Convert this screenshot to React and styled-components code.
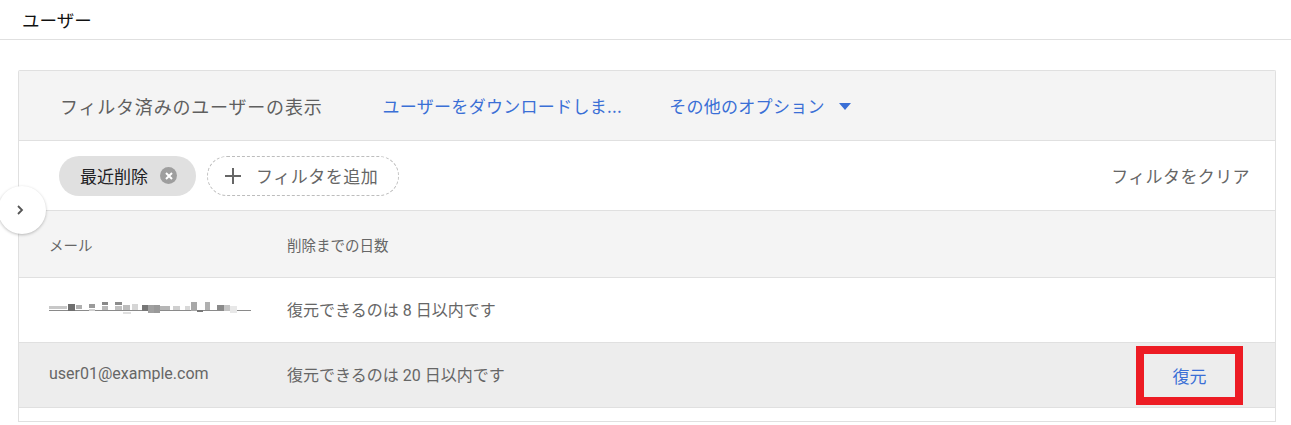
import React from "react";
import styled, { createGlobalStyle } from "styled-components";

const Global = createGlobalStyle`
  html, body { margin: 0; padding: 0; background: #fff; }
  body { font-family: "Noto Sans CJK JP", "Noto Sans", sans-serif; color: #202124; }
`;

const TopBar = styled.header`
  height: 39px;
  border-bottom: 1px solid #e0e0e0;
  display: flex;
  align-items: center;
  padding-left: 22px;
  font-size: 17.5px;
  color: #111;
`;

const Content = styled.main`
  padding: 30px 15px 0 18px;
`;

const Card = styled.section`
  position: relative;
  border: 1px solid #e0e0e0;
  border-bottom: none;
  border-radius: 2px 2px 0 0;
`;

const Toolbar = styled.div`
  height: 69px;
  background: #f4f4f4;
  border-bottom: 1px solid #e0e0e0;
  display: flex;
  align-items: center;
  padding-left: 41px;
`;

const ToolbarTitle = styled.span`
  font-size: 18px;
  letter-spacing: 0.8px;
  color: #5f5f5f;
  margin-right: 60px;
`;

const LinkButton = styled.span`
  font-size: 17px;
  color: #3a6fd6;
  display: inline-flex;
  align-items: center;
  margin-right: ${(p) => p.$mr || 0}px;
  letter-spacing: ${(p) => p.$ls || 0}px;
`;

const Caret = styled.span`
  width: 0;
  height: 0;
  border-left: 6px solid transparent;
  border-right: 6px solid transparent;
  border-top: 7px solid #3a6fd6;
  margin-left: 14px;
  margin-top: 1px;
`;

const FilterRow = styled.div`
  height: 69px;
  border-bottom: 1px solid #e0e0e0;
  display: flex;
  align-items: center;
  padding: 0 25px 0 40px;
  gap: 11px;
`;

const Chip = styled.span`
  height: 40px;
  box-sizing: border-box;
  border-radius: 20px;
  background: #e0e0e0;
  display: inline-flex;
  align-items: center;
  padding: 0 19px 0 21px;
  font-size: 17px;
  color: #202124;
  gap: 12px;
`;

const ChipClose = styled.span`
  width: 17px;
  height: 17px;
  border-radius: 50%;
  background: #9e9e9e;
  display: inline-flex;
  align-items: center;
  justify-content: center;
`;

const AddFilter = styled.span`
  height: 40px;
  box-sizing: border-box;
  border-radius: 20px;
  border: 1px dashed #bdbdbd;
  display: inline-flex;
  align-items: center;
  padding: 0 20px 0 16px;
  font-size: 17px;
  color: #666;
  gap: 14px;
  letter-spacing: 0.5px;
`;

const ClearFilter = styled.span`
  margin-left: auto;
  font-size: 17px;
  color: #666;
  letter-spacing: 0.4px;
`;

const Row = styled.div`
  display: grid;
  grid-template-columns: 238px 1fr auto;
  align-items: center;
  height: ${(p) => p.$h || 64}px;
  padding: 0 32px 0 30px;
  background: ${(p) => p.$bg || "#fff"};
  border-bottom: 1px solid #e0e0e0;
`;

const HeadCell = styled.span`
  font-size: 14.5px;
  color: #666;
`;

const Cell = styled.span`
  color: #666;
  font-family: ${(p) => (p.$latin ? "Roboto, 'Noto Sans', sans-serif" : "inherit")};
  font-size: 16px;
  margin-top: -3px;
`;

const Num = styled.span`
  font-family: Roboto, sans-serif;
  margin: 0 4px;
`;

const RestoreButton = styled.button`
  width: 107px;
  height: 59px;
  box-sizing: border-box;
  border: 8px solid #ed1c24;
  background: transparent;
  font-family: inherit;
  font-size: 17px;
  color: #3a6fd6;
  display: flex;
  align-items: center;
  justify-content: center;
  padding: 0;
  cursor: pointer;
`;

const Collapse = styled.span`
  position: absolute;
  left: -21px;
  top: 115px;
  width: 48px;
  height: 48px;
  border-radius: 50%;
  background: #fff;
  box-shadow: 0 1px 3px rgba(0, 0, 0, 0.25);
  display: flex;
  align-items: center;
  justify-content: center;
  padding-right: 4px;
  box-sizing: border-box;
`;

const redaction = [
  [0, 9, 202, 1, "#8a8a8a"],
  [0, 5, 18, 3, "#c8c8c8"],
  [19, 3, 7, 7, "#6e6e6e"],
  [27, 4, 6, 4, "#b0b0b0"],
  [40, 3, 6, 4, "#9a9a9a"],
  [40, 8, 6, 2, "#d0d0d0"],
  [53, 1, 6, 3, "#888"],
  [53, 5, 6, 4, "#b8b8b8"],
  [66, 1, 7, 3, "#8c8c8c"],
  [66, 5, 7, 4, "#c0c0c0"],
  [74, 4, 7, 5, "#bdbdbd"],
  [74, 11, 8, 2, "#e0e0e0"],
  [83, 3, 6, 6, "#d6d6d6"],
  [93, 4, 6, 6, "#767676"],
  [99, 4, 6, 8, "#a0a0a0"],
  [105, 4, 6, 8, "#999"],
  [111, 5, 10, 4, "#b6b6b6"],
  [124, 5, 7, 4, "#cfcfcf"],
  [136, 5, 5, 4, "#d8d8d8"],
  [142, 1, 6, 9, "#a8a8a8"],
  [148, 9, 6, 2, "#777"],
  [156, 1, 5, 8, "#b0b0b0"],
  [168, 4, 7, 5, "#8a8a8a"],
  [175, 4, 6, 6, "#c4c4c4"],
  [181, 5, 7, 7, "#e8e8e8"],
];

function Redacted() {
  return (
    <svg width="202" height="14" viewBox="0 0 202 14" aria-hidden="true" style={{ marginTop: -4 }}>
      {redaction.map(([x, y, w, h, c], i) => (
        <rect key={i} x={x} y={y} width={w} height={h} fill={c} />
      ))}
    </svg>
  );
}

export default function App() {
  return (
    <>
      <Global />
      <TopBar>ユーザー</TopBar>
      <Content>
        <Card>
          <Toolbar>
            <ToolbarTitle>フィルタ済みのユーザーの表示</ToolbarTitle>
            <LinkButton $mr={47} $ls={0.3}>ユーザーをダウンロードしま...</LinkButton>
            <LinkButton $ls={0.3}>
              その他のオプション
              <Caret />
            </LinkButton>
          </Toolbar>
          <FilterRow>
            <Chip>
              最近削除
              <ChipClose>
                <svg width="8" height="8" viewBox="0 0 8 8">
                  <path d="M1 1L7 7M7 1L1 7" stroke="#fff" strokeWidth="2" />
                </svg>
              </ChipClose>
            </Chip>
            <AddFilter>
              <svg width="18" height="18" viewBox="0 0 18 18">
                <path d="M9 1V17M1 9H17" stroke="#666" strokeWidth="2" />
              </svg>
              フィルタを追加
            </AddFilter>
            <ClearFilter>フィルタをクリア</ClearFilter>
          </FilterRow>
          <Row $h={66} $bg="#f4f4f4">
            <HeadCell>メール</HeadCell>
            <HeadCell>削除までの日数</HeadCell>
            <span />
          </Row>
          <Row>
            <Redacted />
            <Cell>
              復元できるのは<Num>8</Num>日以内です
            </Cell>
            <span />
          </Row>
          <Row $bg="#ededed">
            <Cell $latin>user01@example.com</Cell>
            <Cell>
              復元できるのは<Num>20</Num>日以内です
            </Cell>
            <RestoreButton>復元</RestoreButton>
          </Row>
          <Row $h={13}>
            <span />
            <span />
            <span />
          </Row>
          <Collapse>
            <svg width="10" height="12" viewBox="0 0 10 12">
              <path d="M3 2L7 6L3 10" stroke="#555" strokeWidth="1.8" fill="none" />
            </svg>
          </Collapse>
        </Card>
      </Content>
    </>
  );
}
